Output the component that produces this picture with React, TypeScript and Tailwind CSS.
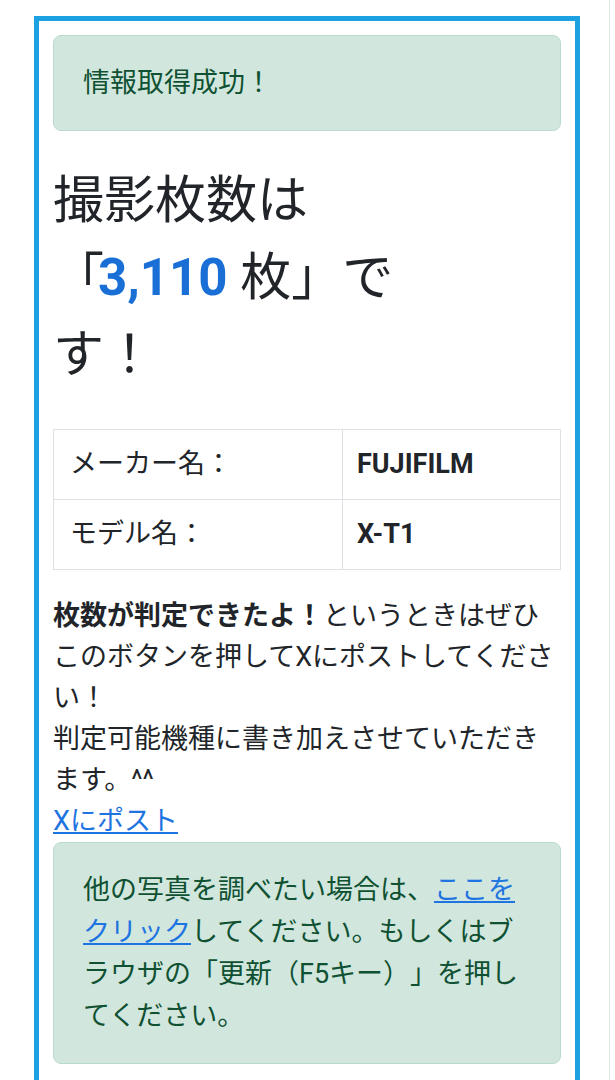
import React from "react";

const font = "font-['Roboto','Noto_Sans_CJK_JP',sans-serif]";

const specs: [string, string][] = [
  ["メーカー名：", "FUJIFILM"],
  ["モデル名：", "X-T1"],
];

const Alert = ({ children }: { children: React.ReactNode }) => (
  <div className="rounded-[8px] border border-[#badbcc] bg-[#d1e7dd] px-[29px] py-[26px] text-[#0f5132]">
    {children}
  </div>
);

const App = () => {
  return (
    <div
      className={`min-h-screen w-[610px] border-r border-[#e4e4e4] bg-white pt-4 ${font} text-[27px] text-[#212529] [text-spacing-trim:space-all]`}
    >
      <div className="ml-[34px] w-[546px] border-[5px] border-[#1ba1e2] px-[14px] pt-[14px] pb-4">
        <Alert>
          <p className="leading-[42px]">情報取得成功！</p>
        </Alert>

        <h1 className="mt-[31px] text-[51px] font-normal leading-[77px]">
          撮影枚数は
          <br />
          「<span className="-ml-[6px] font-bold text-[#1a6fd6]">3,110</span> 枚」で
          <br />
          す！
        </h1>

        <table className="mt-[36px] w-full border-collapse border border-[#dee2e6]">
          <tbody>
            {specs.map(([label, value]) => (
              <tr key={label}>
                <td className="w-[289px] border border-[#dee2e6] px-[16px] py-[16px] leading-[37px]">{label}</td>
                <td className="border border-[#dee2e6] px-[14px] py-[16px] font-bold leading-[37px]">{value}</td>
              </tr>
            ))}
          </tbody>
        </table>

        <p className="mt-[26px] leading-[41px]">
          <b>枚数が判定できたよ！</b>というときはぜひこのボタンを押してXにポストしてください！
          <br />
          判定可能機種に書き加えさせていただきます。^^
          <br />
          <a href="#" className="text-[#1e74e0] underline">
            Xにポスト
          </a>
        </p>

        <Alert>
          <p className="leading-[42px]">
            他の写真を調べたい場合は、
            <a href="#" className="text-[#1e74e0] underline">
              ここをクリック
            </a>
            してください。もしくはブラウザの「更新（F5キー）」を押してください。
          </p>
        </Alert>
      </div>
    </div>
  );
};

export default App;
